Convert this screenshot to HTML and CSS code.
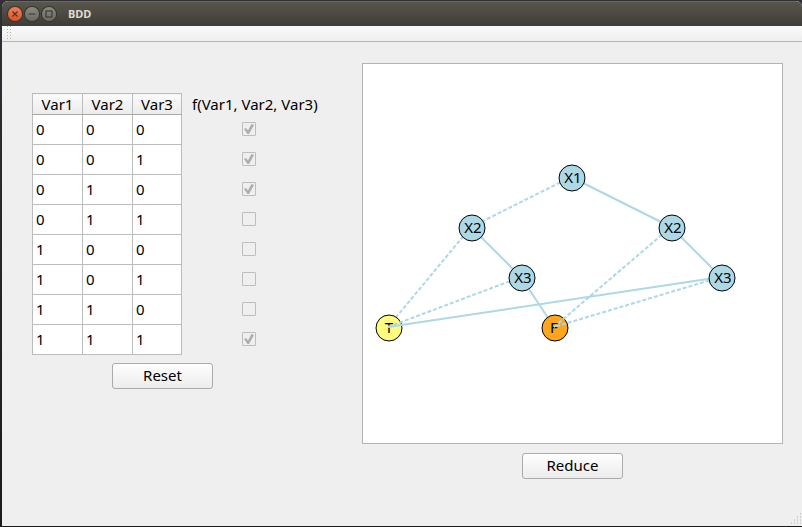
FILE: index.html
```html
<!DOCTYPE html>
<html lang="en">
<head>
<meta charset="utf-8">
<title>BDD</title>
<link rel="stylesheet" href="styles.css">
</head>
<body>
<div class="window">
  <header class="titlebar">
    <button class="control close" aria-label="Close"><svg viewBox="0 0 14 14"><path d="M4.5 4.5l5 5M9.5 4.5l-5 5"/></svg></button>
    <button class="control" aria-label="Minimize"><svg viewBox="0 0 14 14"><path d="M3.5 7h7"/></svg></button>
    <button class="control" aria-label="Maximize"><svg viewBox="0 0 14 14"><rect x="4" y="4" width="6" height="6"/></svg></button>
    <h1>BDD</h1>
  </header>
  <div class="toolbar"><span class="grip"></span></div>
  <main>
    <section class="inputs">
      <div class="truth">
        <table>
          <colgroup><col class="wide"><col class="wide"><col></colgroup>
          <thead><tr><th>Var1</th><th>Var2</th><th>Var3</th></tr></thead>
          <tbody>
            <tr><td>0</td><td>0</td><td>0</td></tr>
            <tr><td>0</td><td>0</td><td>1</td></tr>
            <tr><td>0</td><td>1</td><td>0</td></tr>
            <tr><td>0</td><td>1</td><td>1</td></tr>
            <tr><td>1</td><td>0</td><td>0</td></tr>
            <tr><td>1</td><td>0</td><td>1</td></tr>
            <tr><td>1</td><td>1</td><td>0</td></tr>
            <tr><td>1</td><td>1</td><td>1</td></tr>
          </tbody>
        </table>
        <div class="outputs">
          <div class="label">f(Var1, Var2, Var3)</div>
          <label><input type="checkbox" aria-label="f(0, 0, 0)" checked disabled></label>
          <label><input type="checkbox" aria-label="f(0, 0, 1)" checked disabled></label>
          <label><input type="checkbox" aria-label="f(0, 1, 0)" checked disabled></label>
          <label><input type="checkbox" aria-label="f(0, 1, 1)" disabled></label>
          <label><input type="checkbox" aria-label="f(1, 0, 0)" disabled></label>
          <label><input type="checkbox" aria-label="f(1, 0, 1)" disabled></label>
          <label><input type="checkbox" aria-label="f(1, 1, 0)" disabled></label>
          <label><input type="checkbox" aria-label="f(1, 1, 1)" checked disabled></label>
        </div>
      </div>
      <button class="push reset">Reset</button>
    </section>
    <section class="diagram">
      <svg class="canvas" viewBox="0 0 419 379" role="img" aria-label="Binary decision diagram">
        <g class="edges">
          <path class="low" d="M208 113L108 163M108 163L25 263"/>
          <path d="M208 113L308 163M108 163L158 213M158 213L191 263M308 163L358 213"/>
        </g>
        <g class="nodes">
          <circle class="true" cx="26" cy="264" r="13"/><text x="26" y="269">T</text>
          <circle class="false" cx="192" cy="264" r="13"/><text x="191" y="269">F</text>
        </g>
        <g class="edges">
          <path class="low" d="M158 213L25 263M308 163L191 263M358 213L191 263"/>
          <path d="M358 213L25 263"/>
        </g>
        <g class="nodes">
          <circle cx="209" cy="114" r="13"/><text x="210" y="119">X1</text>
          <circle cx="109" cy="164" r="13"/><text x="110" y="169">X2</text>
          <circle cx="309" cy="164" r="13"/><text x="310" y="169">X2</text>
          <circle cx="159" cy="214" r="13"/><text x="160" y="219">X3</text>
          <circle cx="359" cy="214" r="13"/><text x="360" y="219">X3</text>
        </g>
      </svg>
      <button class="push">Reduce</button>
    </section>
  </main>
  <svg class="resize" viewBox="0 0 12 12" aria-hidden="true"><path d="M10 1h1M7 4h1M10 4h1M4 7h1M7 7h1M10 7h1M1 10h1M4 10h1M7 10h1M10 10h1"/></svg>
</div>
</body>
</html>
```
FILE: styles.css
```css
* {
  box-sizing: border-box;
}

body {
  margin: 0;
  min-height: 100vh;
  padding: 1px 0 1px 2px;
  display: flex;
  background: linear-gradient(#303136, #1b1b1f);
  color: #000;
  font: 15px/20px "Noto Sans", sans-serif;
}

button,
input {
  font: inherit;
}

.window {
  position: relative;
  flex: 1;
  background: #efefef;
  border-radius: 6px 6px 0 0;
  overflow: hidden;
}

.titlebar {
  height: 25px;
  padding: 0 6px;
  display: flex;
  align-items: center;
  gap: 3px;
  background: linear-gradient(#59564b, #3d3c37);
  border-top: 1px solid #6a675c;
}

.titlebar h1 {
  margin: 0 0 0 9px;
  color: #dfdbd2;
  font-size: 11px;
  line-height: 16px;
}

.control {
  width: 14px;
  height: 14px;
  padding: 0;
  border: 0;
  border-radius: 50%;
  background: linear-gradient(#8b8980, #6b6962);
  box-shadow: 0 0 0 1px #35342f;
}

.control.close {
  background: linear-gradient(#f47e5a, #e4501f);
}

.control svg {
  display: block;
  fill: none;
  stroke: #3c3b37;
  stroke-width: 1.2;
}

.toolbar {
  height: 16px;
  padding-left: 5px;
  background: linear-gradient(#fafafa, #eeeeee);
  border-bottom: 1px solid #b5b5b5;
}

.grip {
  display: block;
  width: 5px;
  height: 15px;
  background: conic-gradient(from 270deg at 1px 1px, #b0b0b0 90deg, transparent 0) 0 0 / 3px 3px;
}

main {
  display: flex;
  align-items: flex-start;
  gap: 46px;
  padding: 21px 19px 24px 30px;
}

.inputs {
  padding-top: 30px;
}

.truth {
  display: flex;
  gap: 10px;
}

table {
  width: 150px;
  table-layout: fixed;
  border-collapse: collapse;
  background: #fff;
}

.wide {
  width: 50px;
}

th,
td {
  border: 1px solid #bcbcbc;
}

th {
  height: 21px;
  padding: 0;
  border-bottom-color: #a8a8a8;
  background: linear-gradient(#fbfbfb, #ebebeb);
  font-weight: normal;
}

td {
  height: 30px;
  padding: 0 3px 2px;
}

.outputs label {
  height: 30px;
  width: 114px;
  display: flex;
  align-items: center;
  justify-content: center;
}

.label {
  height: 21px;
  width: 124px;
  padding-top: 1px;
  white-space: nowrap;
}

input[type="checkbox"] {
  appearance: none;
  width: 14px;
  height: 14px;
  margin: 0;
  display: grid;
  place-items: center;
  border: 1px solid #bdbdbd;
  border-radius: 1px;
}

input[type="checkbox"]:checked::before {
  content: "";
  width: 10px;
  height: 10px;
  background: #adadad;
  clip-path: polygon(0 50%, 20% 40%, 40% 65%, 75% 0, 100% 10%, 50% 100%, 35% 100%);
}

.push {
  width: 101px;
  height: 26px;
  padding: 0 0 2px;
  border: 1px solid #ababab;
  border-radius: 3px;
  background: linear-gradient(#fefefe, #ececec);
  color: #000;
}

.reset {
  display: block;
  margin: 8px 0 0 80px;
}

.diagram {
  flex: 1;
  display: flex;
  flex-direction: column;
  align-items: center;
  gap: 9px;
}

.canvas {
  width: 100%;
  height: auto;
  border: 1px solid #b4b4b4;
  background: #fff;
}

.edges {
  fill: none;
  stroke: #add8e6;
  stroke-width: 2;
}

.low {
  stroke-dasharray: 4 2;
}

.nodes circle {
  fill: #add8e6;
  stroke: #000;
}

.nodes .true {
  fill: #fffa80;
}

.nodes .false {
  fill: #ffa51e;
}

.nodes text {
  font-size: 15px;
  text-anchor: middle;
}

.resize {
  position: absolute;
  right: 0;
  bottom: 1px;
  width: 12px;
  height: 12px;
  stroke: #b0b0b0;
}
```
